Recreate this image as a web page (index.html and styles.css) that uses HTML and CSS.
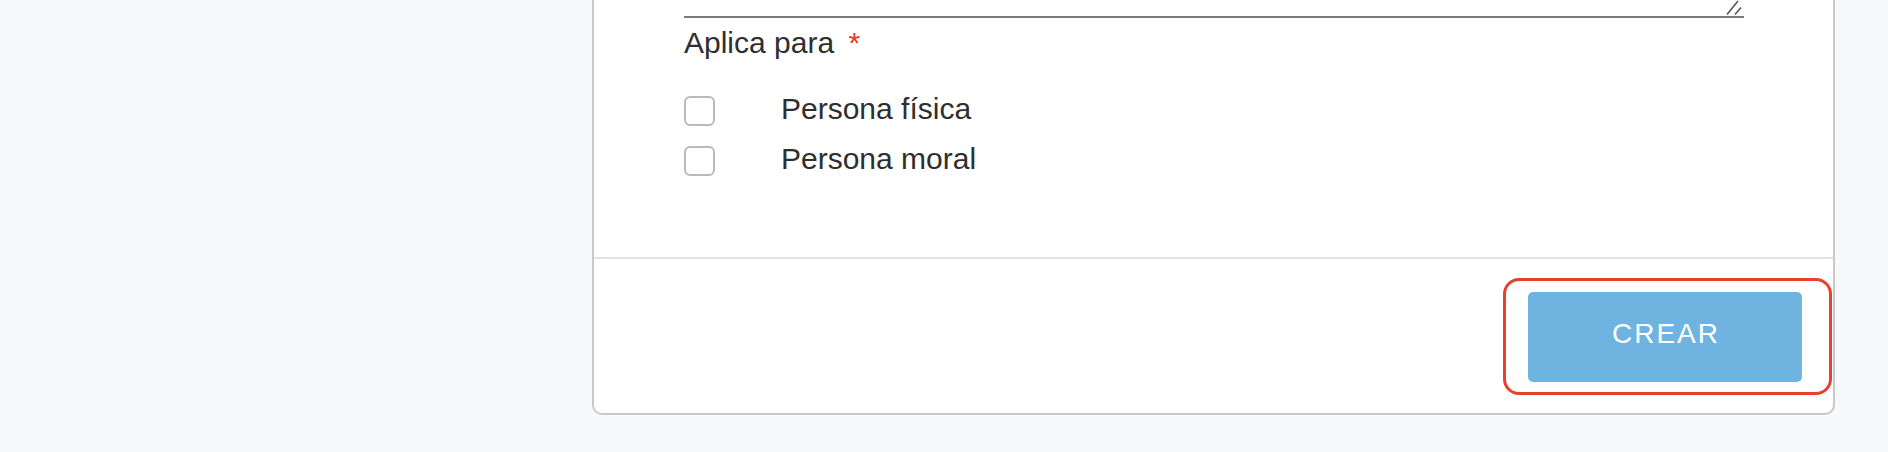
FILE: index.html
```html
<!DOCTYPE html>
<html lang="es">
<head>
<meta charset="utf-8">
<title>Crear</title>
<link rel="stylesheet" href="styles.css">
</head>
<body>
<div class="page">
  <div class="card">
    <div class="card-body">
      <div class="textarea">
        <svg class="resize" width="20" height="16" viewBox="0 0 20 16">
          <line x1="3" y1="14.5" x2="14" y2="1" />
          <line x1="11" y1="14.5" x2="17" y2="7.5" />
        </svg>
      </div>
      <div class="field-label">Aplica para <span class="req">*</span></div>
      <div class="options">
        <label class="option"><span class="box"></span><span class="opt-text">Persona física</span></label>
        <label class="option"><span class="box"></span><span class="opt-text">Persona moral</span></label>
      </div>
    </div>
    <div class="card-footer">
      <div class="highlight">
        <button class="btn" type="button">CREAR</button>
      </div>
    </div>
  </div>
</div>
</body>
</html>
```
FILE: styles.css
```css
html, body {
  margin: 0;
  padding: 0;
}
body {
  background: #f8f9fb;
  font-family: "Liberation Sans", Arial, sans-serif;
  color: #2e2e2e;
  height: 452px;
  overflow: hidden;
}
.page {
  padding-left: 592px;
}
.card {
  box-sizing: border-box;
  width: 1243px;
  background: #ffffff;
  border: 2px solid #c8c9cb;
  border-top: 0;
  border-radius: 0 0 10px 10px;
}
.card-body {
  padding: 0 89px 71px 90px;
}
.textarea {
  position: relative;
  height: 16px;
  border-bottom: 2px solid #7b7b7b;
}
.resize {
  position: absolute;
  right: 0;
  top: 0;
  display: block;
}
.resize line {
  stroke: #555555;
  stroke-width: 1.6;
}
.field-label {
  margin-top: 7px;
  font-size: 30px;
  line-height: 36px;
}
.req {
  color: #e8392a;
  margin-left: 6px;
}
.options {
  margin-top: 25px;
  display: flex;
  flex-direction: column;
}
.option {
  display: flex;
  align-items: center;
  height: 50px;
  font-size: 30px;
  line-height: 36px;
}
.box {
  box-sizing: border-box;
  width: 31px;
  height: 30px;
  border: 2px solid #b6bac1;
  border-radius: 6px;
  background: #ffffff;
}
.opt-text {
  margin-left: 66px;
  margin-top: -4px;
}
.card-footer {
  border-top: 2px solid #dfe3e7;
  height: 154px;
  display: flex;
  justify-content: flex-end;
  align-items: center;
  padding-right: 1px;
}
.highlight {
  border: 3px solid #e8412b;
  border-radius: 16px;
  padding: 11px 27px 10px 22px;
}
.btn {
  display: block;
  width: 274px;
  height: 90px;
  border: 0;
  border-radius: 5px;
  background: #6fb4e0;
  color: #ffffff;
  font-family: "Liberation Sans", Arial, sans-serif;
  font-size: 28px;
  letter-spacing: 2px;
  padding: 0 0 6px 2px;
}
```
